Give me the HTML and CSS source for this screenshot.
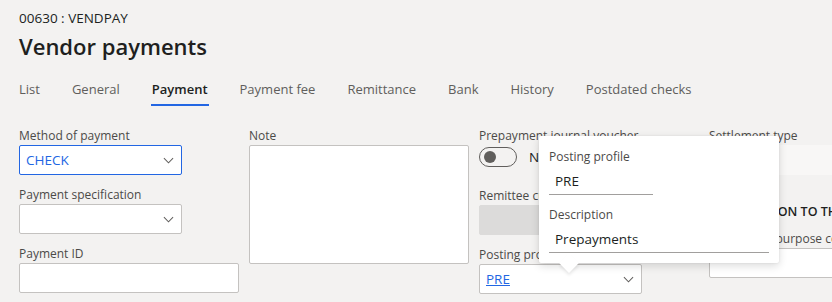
FILE: index.html
```html
<!DOCTYPE html>
<html lang="en">
<head>
    <meta charset="UTF-8">
    <title>Vendor payments</title>
    <link rel="stylesheet" href="styles.css">
</head>
<body>
    <div class="page">
        <!-- Header -->
        <div class="caption">00630 : VENDPAY</div>
        <h1 class="title">Vendor payments</h1>

        <nav class="tabs">
            <span class="tab">List</span>
            <span class="tab">General</span>
            <span class="tab active">Payment</span>
            <span class="tab">Payment fee</span>
            <span class="tab">Remittance</span>
            <span class="tab">Bank</span>
            <span class="tab">History</span>
            <span class="tab">Postdated checks</span>
        </nav>

        <!-- Payment tab fields -->
        <section class="form">
            <div class="col">
                <div class="field">
                    <div class="label">Method of payment</div>
                    <div class="input select focused">
                        <span class="value blue">CHECK</span>
                        <svg class="chevron" viewBox="0 0 12 7"><path d="M1 1l5 5 5-5"/></svg>
                    </div>
                </div>
                <div class="field">
                    <div class="label">Payment specification</div>
                    <div class="input select">
                        <span class="value"></span>
                        <svg class="chevron" viewBox="0 0 12 7"><path d="M1 1l5 5 5-5"/></svg>
                    </div>
                </div>
                <div class="field">
                    <div class="label">Payment ID</div>
                    <div class="input wide"></div>
                </div>
            </div>

            <div class="col">
                <div class="field">
                    <div class="label">Note</div>
                    <div class="input textarea"></div>
                </div>
            </div>

            <div class="col">
                <div class="field">
                    <div class="label">Prepayment journal voucher</div>
                    <div class="toggle-row">
                        <span class="toggle"><span class="knob"></span></span>
                        <span class="toggle-text">No</span>
                    </div>
                </div>
                <div class="field">
                    <div class="label">Remittee currency</div>
                    <div class="input disabled"></div>
                </div>
                <div class="field">
                    <div class="label">Posting profile</div>
                    <div class="input select">
                        <span class="value link">PRE</span>
                        <svg class="chevron" viewBox="0 0 12 7"><path d="M1 1l5 5 5-5"/></svg>
                    </div>
                </div>
            </div>

            <div class="col last">
                <div class="field">
                    <div class="label">Settlement type</div>
                    <div class="input readonly"></div>
                </div>
                <div class="group-title">INFORMATION TO THE BANK</div>
                <div class="field">
                    <div class="label">Remittance purpose code</div>
                    <div class="input"></div>
                </div>
            </div>
        </section>

        <!-- Lookup flyout for posting profile -->
        <div class="flyout">
            <div class="fly-field">
                <div class="label">Posting profile</div>
                <div class="fly-value short">PRE</div>
            </div>
            <div class="fly-field">
                <div class="label">Description</div>
                <div class="fly-value">Prepayments</div>
            </div>
            <span class="beak"></span>
        </div>
    </div>
</body>
</html>
```

FILE: styles.css
```css
body {
    margin: 0;
    background: #f3f2f1;
    font-family: "Open Sans", "Noto Sans", sans-serif;
    color: #323130;
    overflow: hidden;
}

.page {
    position: relative;
    padding: 9px 0 0 19px;
    height: 293px;
}

.caption {
    font-size: 13.5px;
    line-height: 18px;
    color: #201f1e;
}

.title {
    margin: 5px 0 0;
    font-size: 22px;
    font-weight: 600;
    line-height: 28px;
    color: #201f1e;
}

.tabs {
    display: flex;
    gap: 32px;
    margin-top: 19px;
    height: 24px;
}

.tab {
    position: relative;
    font-size: 13px;
    line-height: 20px;
    color: #605e5c;
}

.tab.active {
    color: #201f1e;
    font-weight: 600;
}

.tab.active::after {
    content: "";
    position: absolute;
    left: -1px;
    right: -1px;
    bottom: -3px;
    height: 2px;
    background: #2266e3;
}

.form {
    display: grid;
    grid-template-columns: 220px 220px 220px 220px;
    column-gap: 10px;
    margin-top: 24px;
}

.field {
    margin-bottom: 11px;
}

.label {
    font-size: 12px;
    line-height: 18px;
    color: #4b4a48;
    white-space: nowrap;
}

.input {
    box-sizing: border-box;
    height: 30px;
    background: #fff;
    border: 1px solid #c4c2c0;
    border-radius: 2px;
    display: flex;
    align-items: center;
    padding: 0 6px;
    font-size: 13.5px;
}

.select {
    width: 163px;
    justify-content: space-between;
}

.focused {
    border-color: #2266e3;
}

.value {
    color: #201f1e;
}

.blue {
    color: #2266e3;
}

.link {
    color: #2266e3;
    text-decoration: underline;
}

.chevron {
    width: 11px;
    height: 7px;
    margin-right: 1px;
    fill: none;
    stroke: #605e5c;
    stroke-width: 1.1;
}

.textarea {
    height: 119px;
}

.disabled {
    background: #dcdbda;
    border-color: #dcdbda;
}

.readonly {
    background: #f8f7f6;
    border-color: #f8f7f6;
}

.toggle-row {
    box-sizing: border-box;
    display: flex;
    align-items: center;
    gap: 12px;
    height: 31px;
    padding-bottom: 8px;
}

.toggle {
    box-sizing: border-box;
    width: 38px;
    height: 20px;
    border: 1px solid #605e5c;
    border-radius: 10px;
    display: flex;
    align-items: center;
    padding-left: 4px;
}

.knob {
    width: 12px;
    height: 12px;
    border-radius: 50%;
    background: #605e5c;
}

.toggle-text {
    font-size: 13.5px;
    color: #201f1e;
}

.group-title {
    margin: 28px 0 9px;
    font-size: 12.5px;
    font-weight: 600;
    line-height: 18px;
    color: #201f1e;
    white-space: nowrap;
}

/* flyout sits over the form */
.flyout {
    position: absolute;
    left: 539px;
    top: 136px;
    box-sizing: border-box;
    width: 240px;
    height: 127px;
    padding: 12px 10px 0;
    background: #fff;
    border-radius: 2px;
    box-shadow: 0 3px 8px rgba(0, 0, 0, 0.14), 0 0 2px rgba(0, 0, 0, 0.1);
}

.fly-field {
    margin-bottom: 11px;
}

.fly-value {
    height: 28px;
    line-height: 30px;
    padding-left: 6px;
    font-size: 13.5px;
    color: #201f1e;
    border-bottom: 1px solid #a19f9d;
}

.fly-value.short {
    width: 98px;
}

.beak {
    position: absolute;
    left: 23px;
    bottom: -7px;
    width: 14px;
    height: 14px;
    background: #fff;
    transform: rotate(45deg);
    box-shadow: 2px 2px 3px rgba(0, 0, 0, 0.08);
}
```
